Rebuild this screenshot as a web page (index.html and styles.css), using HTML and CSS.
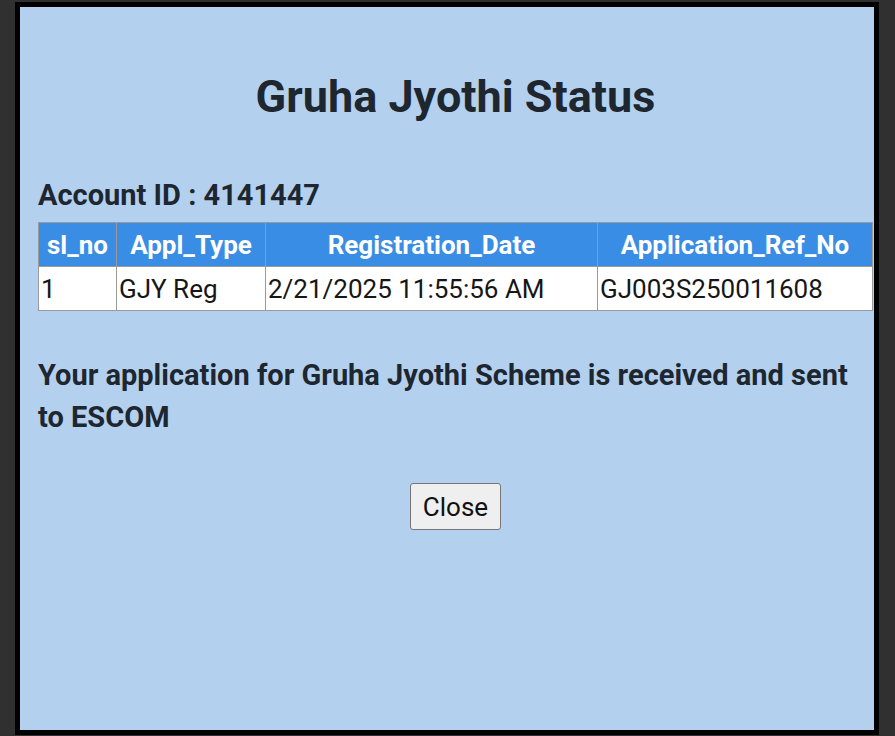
FILE: index.html
```html
<!DOCTYPE html>
<html lang="en">
<head>
  <meta charset="UTF-8">
  <title>Gruha Jyothi Status</title>
  <link rel="stylesheet" href="styles.css">
</head>
<body>
  <div class="dialog">
    <h1>Gruha Jyothi Status</h1>

    <h3 class="account">Account ID : 4141447</h3>

    <table class="status-table">
      <tr>
        <th class="col-sl">sl_no</th>
        <th class="col-type">Appl_Type</th>
        <th class="col-date">Registration_Date</th>
        <th>Application_Ref_No</th>
      </tr>
      <tr>
        <td>1</td>
        <td>GJY Reg</td>
        <td>2/21/2025 11:55:56 AM</td>
        <td>GJ003S250011608</td>
      </tr>
    </table>

    <p class="message">Your application for Gruha Jyothi Scheme is received and sent to ESCOM</p>

    <div class="actions">
      <button type="button" class="close-button">Close</button>
    </div>
  </div>
</body>
</html>
```

FILE: styles.css
```css
html, body {
  margin: 0;
  height: 100%;
}
body {
  font-family: Roboto, 'Liberation Sans', sans-serif;
  background: #303030;
  color: #1e2630;
  padding: 2px 0 0 15px;
  box-sizing: border-box;
  overflow: hidden;
}
.dialog {
  width: 835px;
  height: 723px;
  background: #b3d1ef;
  border: 5px solid #000;
  padding: 0 1px 0 18px;
}
h1 {
  margin: 63px 0 0;
  font-size: 45px;
  line-height: 54px;
  text-align: center;
}
.account {
  margin: 54px 0 0;
  font-size: 29px;
  line-height: 34px;
}
.status-table {
  width: 835px;
  margin-top: 10px;
  border-collapse: collapse;
  background: #fff;
}
.status-table th,
.status-table td {
  border: 1px solid #9a9a9a;
  height: 43px;
  padding: 0 2px;
  font-size: 26px;
}
.status-table th {
  background: #3a8de4;
  color: #fff;
  font-weight: bold;
  text-align: center;
}
.status-table td {
  color: #161616;
  text-align: left;
}
.col-sl {
  width: 73px;
}
.col-type {
  width: 144px;
}
.col-date {
  width: 327px;
}
.message {
  margin: 43px 0 0;
  font-size: 29px;
  font-weight: bold;
  line-height: 42px;
}
.actions {
  margin-top: 45px;
  text-align: center;
}
.close-button {
  font-family: Roboto, 'Liberation Sans', sans-serif;
  font-size: 26px;
  color: #111;
  background: #efefef;
  border: 1px solid #767676;
  border-radius: 3px;
  width: 91px;
  height: 47px;
  padding: 0;
}
```
